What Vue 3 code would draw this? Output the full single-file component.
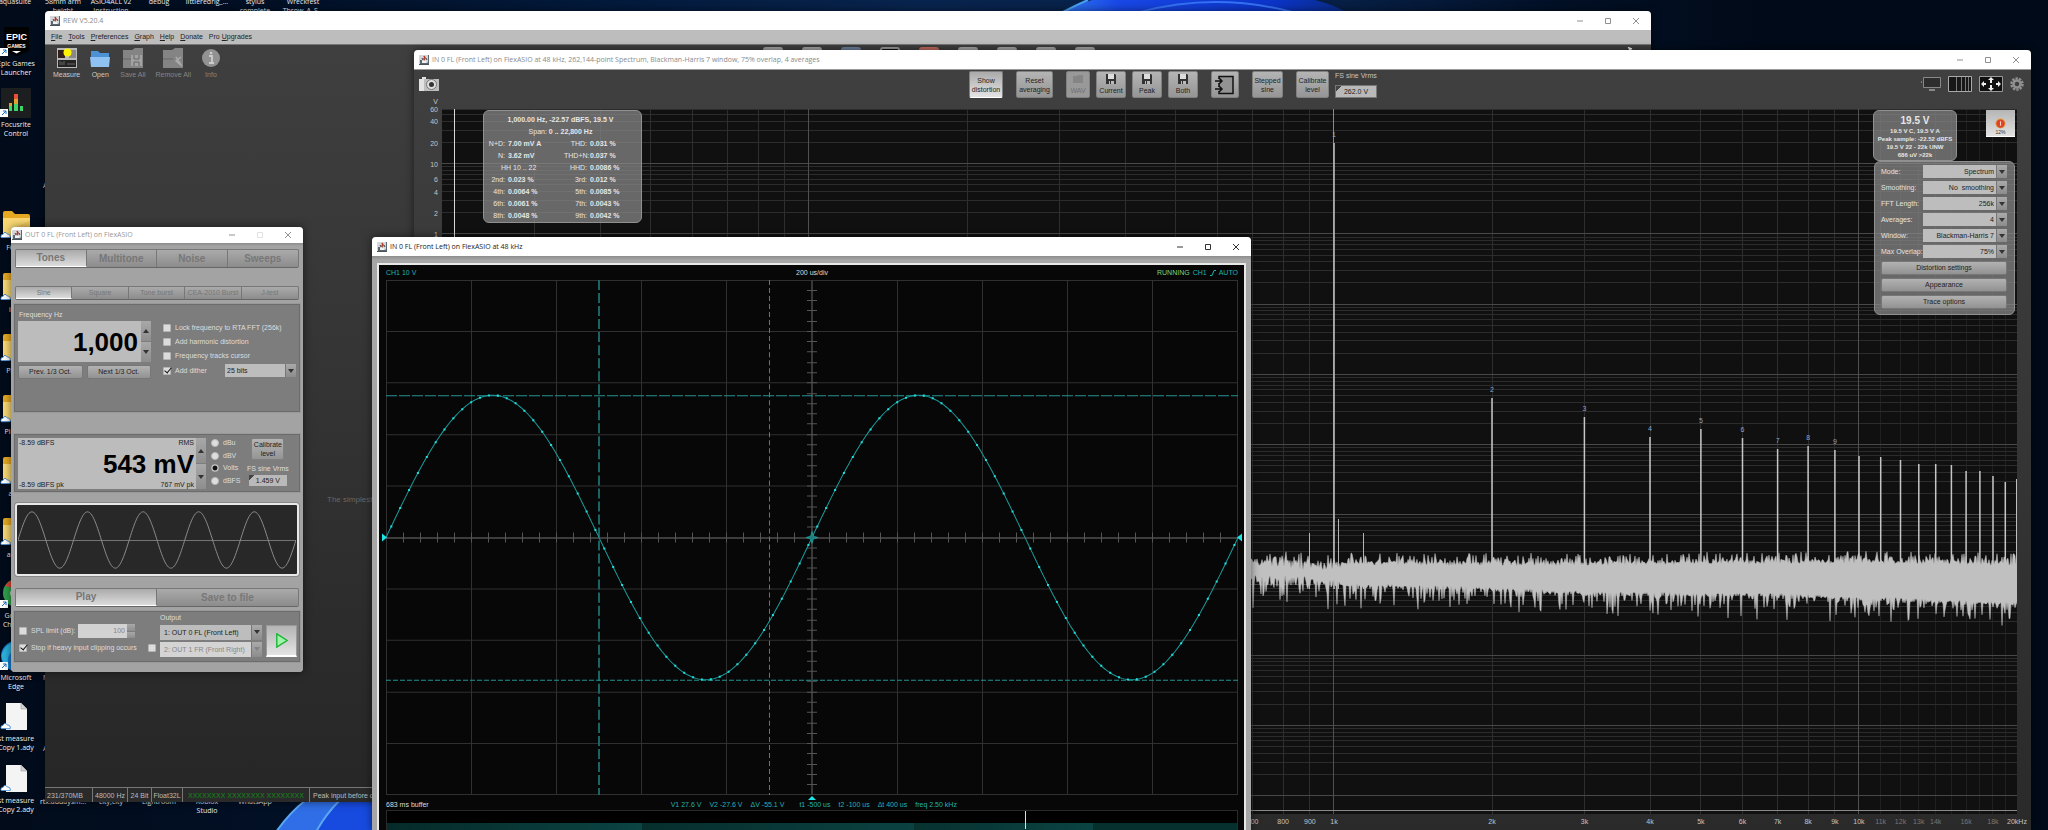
<script setup>
const files = [
  { kind: 'epic', label: ['Epic Games', 'Launcher'] },
  { kind: 'focus', label: ['Focusrite', 'Control'] },
  { kind: 'none', label: [] },
  { kind: 'folder', label: ['FORM'] },
  { kind: 'folder', label: ['iMid'] },
  { kind: 'folder', label: ['Photo'] },
  { kind: 'folder', label: ['Pi Four'] },
  { kind: 'folder', label: ['amir'] },
  { kind: 'folder', label: ['amirs'] },
  { kind: 'chrome', label: ['Google', 'Chrome'] },
  { kind: 'edge', label: ['Microsoft', 'Edge'] },
  { kind: 'file', label: ['st measure', 'Copy 1.ady'] },
  { kind: 'file', label: ['st measure', 'Copy 2.ady'] },
]
const topLabels = [
  ['aquasuite', ''], ['58mm arm', 'height'], ['ASIO4ALL v2', 'Instruction'], ['debug', ''],
  ['littleredrig_...', ''], ['stylus', 'complete'], ['Wreckfest', 'Throw_A_S...'],
]
const bottomLabels = [
  ['rtx.addaysm...', ''], ['city,city', ''], ['Lightroom', ''], ['Roblox', 'Studio'], ['WhatsApp', ''],
]
const menus = [['', 'F', 'ile'], ['', 'T', 'ools'], ['', 'P', 'references'], ['', 'G', 'raph'], ['', 'H', 'elp'], ['', 'D', 'onate'], ['Pro ', 'U', 'pgrades']]

/* Spectrum plot: 20 Hz to 20 kHz across, 60 V downwards on a log scale */
const PW = 1575, PH = 705
const fx = f => 525 * Math.log10(f / 20)
const vy = v => 54.7 - 70.2 * Math.log10(v / 10)
const vMajor = [], vMinor = [], vFaint = []
for (let d = 10; d <= 10000; d *= 10)
  for (let m = 1; m < 10; m++) {
    const f = d * m
    if (f <= 20 || f > 20000) continue
    ;(m === 1 ? vMajor : vMinor).push(fx(f))
  }
for (let f = 11000; f < 20000; f += 1000) vFaint.push(fx(f))
const hMajor = [], hMinor = []
for (let e = -8; e <= 1; e++)
  for (let m = 1; m < 10; m++) {
    const y = vy(m * Math.pow(10, e))
    if (y < 0 || y > 701) continue
    ;(m === 1 ? hMajor : hMinor).push(y)
  }
const snap = n => Math.floor(n) + 0.5
const vPath = xs => xs.map(x => `M${snap(x)} 0V${PH}`).join('')
const hPath = ys => ys.map(y => `M0 ${snap(y)}H${PW}`).join('')

const harmonics = [[1, 34], [2, 289], [3, 308], [4, 328], [5, 320], [6, 329], [7, 340], [8, 337], [9, 341], [10, 347], [11, 348], [12, 351], [13, 355], [14, 355], [15, 356], [16, 362], [17, 362], [18, 367], [19, 373], [19.98, 370]]
const peakPath = harmonics.map(([n, y]) => `M${fx(n * 1000).toFixed(1)} ${y}V480`).join('')
const spurPath = 'M867.500 424V480M896.500 410V480M921.500 424V480'
const peakTags = harmonics.slice(0, 9).map(([n, y]) => ({ n, left: fx(n * 1000) / PW * 100 + '%', top: (y - 8) / PH * 100 + '%' }))

let seed = 7
const rnd = () => (seed = (seed * 16807) % 2147483647) / 2147483647
const env = [[750, 448, 476], [880, 452, 477], [1000, 453, 480], [1150, 453, 486], [1350, 451, 488], [1450, 451, 492], [1576, 453, 497]]
function noise() {
  const top = [], bottom = []
  for (let x = 750; x <= PW; x++) {
    let i = 0
    while (i < env.length - 2 && x > env[i + 1][0]) i++
    const t = (x - env[i][0]) / (env[i + 1][0] - env[i][0])
    const up = env[i][1] + t * (env[i + 1][1] - env[i][1])
    const lo = env[i][2] + t * (env[i + 1][2] - env[i][2])
    const loose = x < 900 ? 8 : 1
    top.push(`${x} ${(up - Math.pow(rnd(), 3) * 10 + rnd() * (3 + loose)).toFixed(1)}`)
    bottom.push(`${x} ${(lo + Math.pow(rnd(), 5) * 24 - rnd() * (3 + loose)).toFixed(1)}`)
  }
  return 'M' + top.concat(bottom.reverse()).join('L') + 'Z'
}
const noisePath = noise()
const axisF = [[700, '700'], [800, '800'], [900, '900'], [1000, '1k'], [2000, '2k'], [3000, '3k'], [4000, '4k'], [5000, '5k'], [6000, '6k'], [7000, '7k'], [8000, '8k'], [9000, '9k'], [10000, '10k'], [11000, '11k', 1], [12000, '12k', 1], [13000, '13k', 1], [14000, '14k', 1], [16000, '16k', 1], [18000, '18k', 1], [20000, '20kHz']]
  .map(([f, t, dim]) => ({ t, dim, left: fx(f) / PW * 100 + '%' }))
const axisV = [60, 40, 20, 10, 6, 4, 2, 1].map(v => ({ v, top: vy(v) / PH * 100 + '%' }))

const stats = [
  ['N+D:', '7.00 mV A', 'THD:', '0.031 %'],
  ['N:', '3.62 mV', 'THD+N:', '0.037 %'],
  ['HH 10 .. 22', '', 'HHD:', '0.0086 %'],
  ['2nd:', '0.023 %', '3rd:', '0.012 %'],
  ['4th:', '0.0064 %', '5th:', '0.0085 %'],
  ['6th:', '0.0061 %', '7th:', '0.0043 %'],
  ['8th:', '0.0048 %', '9th:', '0.0042 %'],
]
const settings = [['Mode:', 'Spectrum'], ['Smoothing:', 'No\u00a0\u00a0smoothing'], ['FFT Length:', '256k'], ['Averages:', '4'], ['Window:', 'Blackman-Harris 7'], ['Max Overlap:', '75%']]

/* Scope: 10 x 10 divisions, two periods */
const SW = 852, SH = 514, MID = 257, AMP = 142
const wave = x => MID - AMP * Math.sin(x * Math.PI * 2 / 426)
let sinePath = 'M0 257'
for (let x = 2; x <= SW; x += 2) sinePath += `L${x} ${wave(x).toFixed(1)}`
const dots = []
for (let x = 5.3; x < SW; x += 8.875) dots.push([x, wave(x)])
const dotPath = dots.map(([x, y]) => `M${(x - 1).toFixed(1)} ${y.toFixed(1)}h2`).join('')
let scopeGrid = ''
for (let i = 0; i <= 10; i++) scopeGrid += `M${snap(Math.min(i * 85.2, 851))} 0V${SH}M0 ${snap(Math.min(i * 51.4, 513))}H${SW}`
let ticks = ''
for (let i = 1; i < 50; i++) ticks += `M${snap(i * 17.04)} 252v10M421 ${snap(i * 10.28)}h10`

/* Generator preview: five cycles */
let genPath = 'M0 35'
for (let x = 1; x <= 279; x++) genPath += `L${x} ${(35 - 29 * Math.sin(x / 279 * Math.PI * 10)).toFixed(1)}`
</script>

<template>
  <main class="desktop">
    <svg class="defs" aria-hidden="true">
      <symbol id="java" viewBox="0 0 10 10">
        <rect width="10" height="10" fill="#d3d7da" />
        <path d="M1 5h2v3h5l1-1v2H1zM9 0h1v10H9z" fill="#5b656e" /><path d="M0 9h10v1H0z" fill="#4a545c" />
        <path d="M3 6h4v2H3z" fill="#eef2f4" /><path d="M5 1l1 2-1 1 1 1" stroke="#b5382a" stroke-width="1.600" fill="none" />
        <path d="M3 3l1 2M7 3l1 2" stroke="#444" fill="none" />
      </symbol>
      <symbol id="floppy" viewBox="0 0 10 10"><path d="M0 0h9l1 1v9H0z" fill="#333" /><path d="M2 0h6v5H2z" fill="#ddd" /><path d="M3 7h5v3H3z" fill="#bbb" /><path d="M4 7h1v3H4z" fill="#333" /></symbol>
    </svg>
    <svg class="bloom" aria-hidden="true">
      <defs>
        <linearGradient id="b1" x1="0" x2="1"><stop offset="0" stop-color="#2f74f0" /><stop offset=".2" stop-color="#1847e6" /><stop offset=".75" stop-color="#0b34c8" /><stop offset="1" stop-color="#0a2c86" /></linearGradient>
      </defs>
      <path d="M1063 12Q1076 5 1092 0H1315Q1334 5 1346 12z" fill="url(#b1)" />
      <path d="M1140 12Q1215-8 1292 12" fill="none" stroke="#3672f5" stroke-width="2" />
      <path d="M1063 12Q1076 5 1088 0" fill="none" stroke="#4ba2f5" stroke-width="2" />
      <path d="M276 832Q290 812 306 800H380V832z" fill="#174be0" />
      <path d="M276 832Q290 812 306 800h34Q325 815 316 832z" fill="#2f6ee6" />
      <path d="M276 832Q290 812 306 800M316 832Q325 815 340 800" fill="none" stroke="#5aa7f2" stroke-width="2" />
    </svg>

    <div class="strip top"><p v-for="l in topLabels" :key="l[0]">{{ l[0] }}<br>{{ l[1] }}</p></div>
    <div class="strip bottom"><p v-for="l in bottomLabels" :key="l[0]">{{ l[0] }}<br>{{ l[1] }}</p></div>
    <span class="peek p1">A</span><span class="peek p2">M</span><span class="peek p3">A</span>

    <div class="files">
      <div v-for="(f, i) in files" :key="i" class="file">
        <svg v-if="f.kind === 'epic'" viewBox="0 0 30 30"><path d="M3 0h25v24l-12 5-13-5z" fill="#020202" />
          <text x="15.500" y="13" class="epic">EPIC</text><text x="15.500" y="21" class="games">GAMES</text><path d="M11 24h9l-4.500 2.500z" fill="#fff" /></svg>
        <svg v-else-if="f.kind === 'focus'" viewBox="0 0 30 30"><rect width="30" height="30" fill="#1c1e20" /><path d="M8 23V15h3v8zM19 23v-5h3v5zM13 23V14h4v9z" fill="#3ed267" /><path d="M8 18v-3h3v3zM13 16v-6h4v6z" fill="#e0a030" /><path d="M13 11V6h4v5z" fill="#e8503a" /></svg>
        <svg v-else-if="f.kind === 'folder'" viewBox="0 0 30 30"><path d="M2 2q0-2 2-2h7l3 3h13q2 0 2 2v21H2z" fill="#e5a823" /><path d="M2 7h27v19H2z" fill="#f9d873" /><path d="M16 16l13-7v17H8z" fill="#f3c95a" /></svg>
        <svg v-else-if="f.kind === 'chrome'" viewBox="0 0 30 30"><circle cx="16" cy="14" r="14" fill="#2f9e4a" /><path d="M4 7a14 14 0 0 1 25 3H16z" fill="#d94335" /><path d="M29 10a14 14 0 0 1-13 18l6-14z" fill="#f2c230" /><circle cx="16" cy="14" r="6" fill="#3f7de8" stroke="#fff" stroke-width="1.500" /></svg>
        <svg v-else-if="f.kind === 'edge'" viewBox="0 0 30 30"><circle cx="15" cy="15" r="15" fill="#1579c9" /><path d="M1 12Q6 0 18 1q10 2 12 12-8-7-17-3T8 26Q-1 20 1 12z" fill="#2cb0dc" /></svg>
        <svg v-else-if="f.kind === 'file'" viewBox="0 0 30 30"><path d="M5 1h15l6 6v21H5z" fill="#f4f4f4" /><path d="M20 1v6h6" fill="#d2d2d2" stroke="#888" stroke-width=".5" /></svg>
        <svg v-else viewBox="0 0 30 30" />
        <i v-if="['epic', 'focus', 'chrome', 'edge'].includes(f.kind)" class="short"><svg viewBox="0 0 8 8"><path d="M2 6l4-4M3 2h3v3" fill="none" stroke="#1670c8" /></svg></i>
        <i v-else-if="f.kind !== 'none'" class="cloud"><svg viewBox="0 0 9 6"><path d="M1 5.500Q0 3 2.500 2.700 4-.5 6 2.500 9 2.500 8.300 5.500z" fill="#fff" stroke="#2c7fd2" stroke-width=".7" /></svg></i>
        <p><template v-for="t in f.label" :key="t">{{ t }}<br></template></p>
      </div>
    </div>

    <!-- REW main window -->
    <section class="win rew">
      <header class="bar"><svg class="java"><use href="#java" /></svg><h1>REW V5.20.4</h1>
        <span class="ctl"><button aria-label="Minimize"><svg viewBox="0 0 8 8"><path d="M1 4h6" /></svg></button><button aria-label="Maximize"><svg viewBox="0 0 8 8"><path d="M1.500 1.500h5v5h-5z" /></svg></button><button aria-label="Close"><svg viewBox="0 0 8 8"><path d="M1 1l6 6M7 1l-6 6" /></svg></button></span>
      </header>
      <nav class="menu"><a v-for="m in menus" :key="m[1]" href="#">{{ m[0] }}<u>{{ m[1] }}</u>{{ m[2] }}</a></nav>
      <div class="tools">
        <button><svg viewBox="0 0 20 20"><rect width="20" height="20" fill="#b9b9b9" /><path d="M1 2h7v8H1z" fill="#33201a" /><path d="M12 2h7v8h-7z" fill="#888" /><path d="M1 12h18v7H1z" fill="#242424" /><path d="M3 13v4M5 14v3M7 13v4M10 16h8" stroke="#666" /><circle cx="10.500" cy="4.500" r="4" fill="#fff200" /></svg>Measure</button>
        <button><svg viewBox="0 0 20 20"><path d="M1 3h7l2 2h9v6H1z" fill="#4d92d4" /><path d="M0 9h20l-1 10H1z" fill="#8fc1f2" /></svg>Open</button>
        <button disabled><svg viewBox="0 0 20 20"><path d="M0 2h9l3-2h8v20H0z" fill="#848484" /><path d="M8 7h11v11H8z" fill="#a2a2a2" /><path d="M0 11h8M11 7v4h5V7M11 18v-4h5v4" stroke="#666" fill="none" /></svg>Save All</button>
        <button disabled><svg viewBox="0 0 20 20"><path d="M0 2h9l3-2h8v20H0z" fill="#848484" /><path d="M0 11h10" stroke="#666" /><path d="M18 9l-5 4 6 5M13 9l5 8" stroke="#aaa" stroke-width="1.500" fill="none" /></svg>Remove All</button>
        <button disabled><svg viewBox="0 0 20 20"><circle cx="10" cy="10" r="9" fill="#929292" /><path d="M8 8h3v7h2M8 15h5" stroke="#ccc" stroke-width="1.800" fill="none" /><circle cx="10" cy="5" r="1.300" fill="#ccc" /></svg>Info</button>
        <span class="stubs"><i v-for="n in 9" :key="n" :class="'s' + n" /></span>
        <svg class="wrench" viewBox="0 0 8 8"><path d="M2 8l3-5-1-2 3 1" stroke="#eee" stroke-width="1.500" fill="none" /></svg>
      </div>
      <p class="hint">The simplest</p>
      <footer class="status"><span class="mem">231/370MB</span><span class="hz">48000 Hz</span><span class="bit">24 Bit</span><span class="fmt">Float32L</span><span class="io">XXXXXXXX XXXXXXXX XXXXXXXX</span><span class="pk">Peak input before clipping</span></footer>
    </section>

    <!-- RTA window -->
    <section class="win rta">
      <header class="bar"><svg class="java"><use href="#java" /></svg><h1>IN 0 FL (Front Left) on FlexASIO at 48 kHz, 262,144-point Spectrum, Blackman-Harris 7 window, 75% overlap, 4 averages</h1>
        <span class="ctl"><button aria-label="Minimize"><svg viewBox="0 0 8 8"><path d="M1 4h6" /></svg></button><button aria-label="Maximize"><svg viewBox="0 0 8 8"><path d="M1.500 1.500h5v5h-5z" /></svg></button><button aria-label="Close"><svg viewBox="0 0 8 8"><path d="M1 1l6 6M7 1l-6 6" /></svg></button></span>
      </header>
      <div class="rtatools">
        <button class="cam" aria-label="Capture"><svg viewBox="0 0 20 14"><path d="M0 2h3V0h4v2h13v12H0z" fill="#e2e2e2" /><path d="M5 2h15v12H5z" fill="#bdbdbd" /><circle cx="12.500" cy="7.500" r="5" fill="#dedede" stroke="#777" /><circle cx="12.500" cy="7.500" r="2.500" fill="#333" /></svg></button>
        <div class="mid">
          <button class="jb on w34">Show<br>distortion</button>
          <button class="jb w37">Reset<br>averaging</button>
          <div class="saves">
            <button class="jb w24" disabled><svg viewBox="0 0 10 10"><path d="M0 2h4l1-1h5v8H0z" fill="#858585" /></svg>WAV</button>
            <button class="jb w30"><svg viewBox="0 0 10 10"><use href="#floppy" /></svg>Current</button>
            <button class="jb w30"><svg viewBox="0 0 10 10"><use href="#floppy" /></svg>Peak</button>
            <button class="jb w30"><svg viewBox="0 0 10 10"><use href="#floppy" /></svg>Both</button>
          </div>
          <button class="jb w28" aria-label="Input routing"><svg class="route" viewBox="0 0 20 20"><path d="M4 4V1.500h14v17H4V16M4 8v4" fill="#929292" stroke="#111" stroke-width="1.500" /><path d="M0 6h7M4 3l3 3-3 3M0 14h7M4 11l3 3-3 3" fill="none" stroke="#111" stroke-width="1.500" /></svg></button>
          <button class="jb w31">Stepped<br>sine</button>
          <div class="cal"><button class="jb w33">Calibrate<br>level</button><label>FS sine Vrms<input value="262.0 V"></label></div>
        </div>
        <div class="view">
          <button aria-label="Display"><svg width="20" height="16" viewBox="0 0 20 16"><path d="M2.500 1.500h17v10h-17z" fill="#2e2e2e" stroke="#888" /><path d="M8 14h6" stroke="#888" stroke-width="2" /><path d="M0 6h1" stroke="#bbb" /></svg></button>
          <button aria-label="Grid"><svg width="24" height="16" viewBox="0 0 24 16"><path d="M.5.5h23v15H.5z" fill="#171717" stroke="#aaa" /><path d="M8.500 1v14M13.500 1v14M17.500 1v14M20.500 1v14" stroke="#777" /></svg></button>
          <button aria-label="Fit"><svg width="24" height="16" viewBox="0 0 24 16"><path d="M.5.5h23v15H.5z" fill="#101010" stroke="#999" /><path d="M12 1l3 3h-2v3h-2V4H9zM12 15l3-3h-2V9h-2v3H9zM2 8l3-3v2h2v2H5v2zM22 8l-3-3v2h-2v2h2v2z" fill="#eee" /></svg></button>
          <button aria-label="Settings"><svg width="14" height="14" viewBox="0 0 14 14"><circle cx="7" cy="7" r="5.500" fill="none" stroke="#909090" stroke-width="2.500" stroke-dasharray="2.300 1.100" /><circle cx="7" cy="7" r="3.500" fill="none" stroke="#909090" stroke-width="2.500" /></svg></button>
        </div>
      </div>
      <div class="plotrow">
        <div class="vaxis"><span class="unit">V</span><span v-for="a in axisV" :key="a.v" :style="{ top: a.top }">{{ a.v }}</span></div>
        <div class="plot">
          <svg class="fill" viewBox="0 0 1575 705" preserveAspectRatio="none">
            <path :d="vPath(vFaint)" stroke="#202020" /><path :d="hPath(hMinor)" stroke="#2c2c2c" /><path :d="vPath(vMinor)" stroke="#2e2e2e" />
            <path :d="hPath(hMajor)" stroke="#484848" /><path :d="vPath(vMajor)" stroke="#505050" />
            <path d="M0 701.500H1575" stroke="#8a8a8a" /><path d="M12.500 0V701" stroke="#d8d8d8" />
            <path d="M891.500 0V34" stroke="#8a8a8a" />
            <path :d="peakPath" stroke="#c6c6c6" stroke-width="1.500" /><path :d="spurPath" stroke="#b4b4b4" /><path :d="noisePath" fill="#c0c0c0" stroke="#c0c0c0" stroke-width=".5" />
          </svg>
          <span v-for="p in peakTags" :key="p.n" class="tag" :style="{ left: p.left, top: p.top }">{{ p.n }}</span>
          <div class="glass info">
            <p><b>1,000.00 Hz, -22.57 dBFS, 19.5 V</b></p>
            <p>Span: <b>0 .. 22,800 Hz</b></p>
            <table><tbody><tr v-for="s in stats" :key="s[0]">
              <template v-if="s[1]"><th>{{ s[0] }}</th><td>{{ s[1] }}</td></template><td v-else colspan="2" class="span">{{ s[0] }}</td>
              <th>{{ s[2] }}</th><td>{{ s[3] }}</td></tr></tbody></table>
          </div>
          <div class="glass level"><strong>19.5 V</strong><b>19.5 V C, 19.5 V A</b><b>Peak sample: -22.52 dBFS</b><b>19.5 V 22 - 22k UNW</b><b>686 uV &gt;22k</b></div>
          <button class="rec" aria-label="Record"><svg viewBox="0 0 12 12"><circle cx="6" cy="6" r="5.500" fill="#e0a03c" /><circle cx="6" cy="6" r="4.500" fill="#dd4230" /><path d="M6 3.500v5" stroke="#fbd0b8" stroke-width="1.200" /></svg>12%</button>
          <form class="glass set" @submit.prevent>
            <label v-for="s in settings" :key="s[0]"><span>{{ s[0] }}</span><span class="dd"><select><option>{{ s[1] }}</option></select></span></label>
            <button class="flat">Distortion settings</button><button class="flat">Appearance</button><button class="flat">Trace options</button>
          </form>
        </div>
      </div>
      <div class="faxis"><span v-for="a in axisF" :key="a.t" :class="{ dim: a.dim }" :style="{ left: a.left }">{{ a.t }}</span></div>
    </section>

    <!-- Generator window -->
    <section class="win gen">
      <header class="bar"><svg class="java"><use href="#java" /></svg><h1>OUT 0 FL (Front Left) on FlexASIO</h1>
        <span class="ctl"><button aria-label="Minimize"><svg viewBox="0 0 8 8"><path d="M1 4h6" /></svg></button><button aria-label="Maximize" disabled><svg viewBox="0 0 8 8"><path d="M1.500 1.500h5v5h-5z" /></svg></button><button aria-label="Close"><svg viewBox="0 0 8 8"><path d="M1 1l6 6M7 1l-6 6" /></svg></button></span>
      </header>
      <div class="genbody">
        <div class="tabs big"><button class="on">Tones</button><button>Multitone</button><button>Noise</button><button>Sweeps</button></div>
        <div class="tabs small"><button class="on">Sine</button><button>Square</button><button>Tone burst</button><button>CEA-2010 Burst</button><button>J-test</button></div>
        <div class="panel freq">
          <div class="fl">
            <label for="fq">Frequency Hz</label>
            <div class="num"><input id="fq" value="1,000"><span class="spin"><button aria-label="Up" class="up" /><button aria-label="Down" class="dn" /></span></div>
            <div class="pair"><button class="flat">Prev. 1/3 Oct.</button><button class="flat">Next 1/3 Oct.</button></div>
          </div>
          <div class="fr">
            <label><input type="checkbox">Lock frequency to RTA FFT (256k)</label>
            <label><input type="checkbox">Add harmonic distortion</label>
            <label><input type="checkbox">Frequency tracks cursor</label>
            <div class="dither"><label><input type="checkbox" checked>Add dither</label><span class="dd left"><select aria-label="Dither bits"><option>25 bits</option></select></span></div>
          </div>
        </div>
        <div class="panel lvl">
          <div class="num tall"><div class="read"><div><span>-8.59 dBFS</span><span>RMS</span></div><input value="543 mV" aria-label="Level"><div><span>-8.59 dBFS pk</span><span>767 mV pk</span></div></div><span class="spin"><button aria-label="Up" class="up" /><button aria-label="Down" class="dn" /></span></div>
          <div class="units"><label><input type="radio" name="u">dBu</label><label><input type="radio" name="u">dBV</label><label><input type="radio" name="u" checked>Volts</label><label><input type="radio" name="u">dBFS</label></div>
          <div class="calb"><button class="jb">Calibrate<br>level</button><label>FS sine Vrms<input value="1.459 V"></label></div>
        </div>
        <div class="preview"><svg viewBox="0 0 279 69" preserveAspectRatio="none"><path d="M0 35.500H279" stroke="#777" /><path :d="genPath" stroke="#8c8c8c" fill="none" /></svg></div>
        <div class="tabs big play"><button class="on">Play</button><button>Save to file</button></div>
        <div class="panel out">
          <div class="ol">
            <div class="spl"><label><input type="checkbox">SPL limit (dB):</label><span class="num mini"><input value="100" disabled aria-label="SPL limit"><span class="spin"><button aria-label="Up" disabled /><button aria-label="Down" disabled /></span></span></div>
            <label><input type="checkbox" checked>Stop if heavy input clipping occurs</label>
          </div>
          <input type="checkbox" class="ch2" aria-label="Second output">
          <div class="om"><label for="o1">Output</label><span class="dd left"><select id="o1"><option>1: OUT 0 FL (Front Left)</option></select></span><span class="dd left off"><select disabled aria-label="Output 2"><option>2: OUT 1 FR (Front Right)</option></select></span></div>
          <button class="go" aria-label="Play"><svg viewBox="0 0 16 16"><path d="M3 1l11 7-11 7z" fill="#9ff5a8" stroke="#1cb43a" stroke-width="1.500" /></svg></button>
        </div>
      </div>
    </section>

    <!-- Scope window -->
    <section class="win scope">
      <header class="bar"><svg class="java"><use href="#java" /></svg><h1>IN 0 FL (Front Left) on FlexASIO at 48 kHz</h1>
        <span class="ctl"><button aria-label="Minimize"><svg viewBox="0 0 8 8"><path d="M1 4h6" /></svg></button><button aria-label="Maximize"><svg viewBox="0 0 8 8"><path d="M1.500 1.500h5v5h-5z" /></svg></button><button aria-label="Close"><svg viewBox="0 0 8 8"><path d="M1 1l6 6M7 1l-6 6" /></svg></button></span>
      </header>
      <div class="frame"><div class="screen">
        <div class="read3"><span>CH1 10 V</span><span class="wh">200 us/div</span><span class="r"><em>RUNNING</em><span>CH1</span><svg viewBox="0 0 6 6"><path d="M0 5.500h2l2-5h2" fill="none" stroke="#22b2b2" /></svg><span>AUTO</span></span></div>
        <div class="grid">
          <svg viewBox="0 0 852 514" preserveAspectRatio="none">
            <path :d="scopeGrid" stroke="#303030" /><path d="M426 0V514" stroke="#383838" stroke-width="2" /><path d="M0 257.500H852" stroke="#606060" /><path :d="ticks" stroke="#555" />
            <path d="M213 0V514" stroke="#1c6464" stroke-width="2" stroke-dasharray="10 3" /><path d="M383.500 0V514" stroke="#259292" stroke-dasharray="5 3" />
            <path d="M0 115.500H852" stroke="#259292" stroke-dasharray="11 2" /><path d="M0 399.500H852" stroke="#259292" stroke-dasharray="5 2" />
            <path :d="sinePath" stroke="#1b9c9c" fill="none" /><path :d="dotPath" stroke="#22dede" stroke-width="2" />
            <path d="M426 251l1.500 4.500 4.500 1.500-4.500 1.500-1.500 4.500-1.500-4.500-4.500-1.500 4.500-1.500z" fill="#1e8080" stroke="#22b0b0" stroke-width=".5" />
            <path d="M-4 253v8l5-4zM856 253v8l-5-4zM422 519h8l-4-4z" fill="#1ee4e4" />
          </svg>
        </div>
        <div class="read3 low"><span class="wh">683 ms buffer</span><span class="meas"><span>V1 27.6 V</span><span>V2 -27.6 V</span><span>ΔV -55.1 V</span><span class="t">t1 -500 us</span><span>t2 -100 us</span><span>Δt 400 us</span><span>freq 2.50 kHz</span></span></div>
        <div class="buf"><div class="band" /><i /></div>
      </div></div>
    </section>
  </main>
</template>

<style>
body { margin: 0; background: #010b1a; }
</style>
<style scoped>
.desktop { position: relative; min-height: 100vh; overflow: hidden; background: linear-gradient(90deg, #010b1a 0, #020f24 12%, #031a3c 30%, #08244e 45%, #071f45 66%, #021026 76%, #010a18 86%); font: 7px/10px "Liberation Sans", Arial, sans-serif; color: #222; }
* { box-sizing: border-box; }
p, h1 { margin: 0; }
button, input, select { font: inherit; color: inherit; margin: 0; padding: 0; border: 0; border-radius: 0; background: none; min-width: 0; }
button { cursor: pointer; }
svg { display: block; }
.defs { position: absolute; width: 0; height: 0; }
.bloom { position: absolute; width: 100%; height: 100%; }
.strip { position: absolute; display: grid; grid-auto-flow: column; grid-auto-columns: 48px; font: 7px/9px "Open Sans", sans-serif; color: #e8ecf0; text-align: center; white-space: nowrap; }
.strip.top { left: -9px; top: -3px; }
.strip.bottom { left: 39px; top: 797px; }
.peek { position: absolute; left: 43px; font: 7px/10px "Open Sans", sans-serif; color: #dde; }
.p1 { top: 181px; } .p2 { top: 673px; } .p3 { top: 744px; }
.files { position: absolute; left: -9px; top: 27px; width: 50px; height: 798px; display: grid; grid-auto-rows: 1fr; }
.file { position: relative; display: flex; flex-direction: column; align-items: center; font: 7px/9px "Open Sans", sans-serif; color: #eef1f5; text-align: center; white-space: nowrap; text-shadow: 0 1px 1px #000; }
.file > svg { width: 30px; height: 30px; flex: none; margin-bottom: 2px; }
.epic { font: bold 9px "Liberation Sans", sans-serif; fill: #fff; text-anchor: middle; }
.games { font: bold 5px "Liberation Sans", sans-serif; fill: #fff; text-anchor: middle; }
.short { position: absolute; left: 9px; top: 21px; width: 8px; height: 8px; background: #fff; }
.cloud { position: absolute; left: 9px; top: 20px; width: 11px; }

.win { position: absolute; display: flex; flex-direction: column; border-radius: 4px 4px 0 0; overflow: hidden; box-shadow: 0 0 8px #0008; }
.bar { flex: none; display: flex; align-items: center; height: 19px; padding: 0 1px 0 5px; gap: 3px; background: #fff; color: #8a8a8a; }
.bar h1 { flex: 1; font: 7px/10px "Open Sans", sans-serif; white-space: nowrap; }
.java { width: 10px; height: 10px; flex: none; }
.ctl { display: flex; }
.ctl button { width: 28px; height: 16px; display: grid; place-items: center; }
.ctl svg { width: 8px; height: 8px; fill: none; stroke: #8f8f8f; }
.ctl button:disabled svg { stroke: #e2e2e2; }

.rew { left: 45px; top: 11px; right: 397px; bottom: 28px; background: linear-gradient(#404040, #262626); color: #ccc; }
.menu { flex: none; display: flex; gap: 6px; height: 15px; align-items: center; padding-left: 6px; background: #bdbdbd; border-bottom: 1px solid #777; }
.menu a { color: #222; text-decoration: none; }
.tools { position: relative; display: flex; gap: 10px; padding: 3px 8px; }
.tools button { display: grid; justify-items: center; gap: 2px; line-height: 9px; color: #c9c9c9; }
.tools button:disabled { color: #858585; }
.tools button svg { width: 20px; height: 20px; }
.stubs { position: absolute; left: 718px; top: 2px; display: flex; gap: 19px; }
.stubs i { width: 20px; height: 12px; background: #a5a5a5; border-radius: 3px; }
.stubs .s3 { border-top: 3px solid #6d7f9c; } .stubs .s4 { border: 2px solid #999; background: #111; } .stubs .s5 { border-top: 3px solid #c0695c; }
.wrench { position: absolute; right: 18px; top: 2px; width: 8px; height: 8px; }
.hint { flex: 1; padding: 413px 0 0 282px; font-size: 8px; color: #666; }
.status { flex: none; display: flex; height: 15px; border-top: 1px solid #777; background: #2a2a2a; line-height: 15px; white-space: nowrap; color: #bbb; text-align: center; }
.status span { border-right: 1px solid #777; overflow: hidden; }
.status .mem { width: 48px; padding-left: 2px; text-align: left; }
.status .hz { width: 35px; } .status .bit { width: 24px; } .status .fmt { width: 31px; }
.status .io { width: 127px; color: #1c6a20; font-size: 7px; font-weight: bold; }
.status .pk { padding-left: 3px; }

.rta { left: 414px; top: 50px; right: 17px; bottom: 0; background: linear-gradient(#404040, #2a2a2a); color: #c4c4c4; }
.rta .bar { border-bottom: 1px solid #999; height: 20px; }
.rtatools { flex: none; display: flex; height: 39px; padding: 1px 7px 0 5px; align-items: flex-start; }
.cam { margin-top: 6px; } .cam svg { width: 20px; height: 14px; }
.mid { display: flex; flex: 1; justify-content: center; gap: 13px; margin-right: 14px; }
.jb { height: 27px; border-radius: 2px; background: linear-gradient(#b4b4b4, #959595); border: 1px solid #808080; color: #222; line-height: 9px; text-align: center; }
.jb.on { background: linear-gradient(#aaa, #e4e4e4); border-bottom-color: #fff; }
.jb svg { width: 10px; height: 10px; margin: 0 auto 2px; }
.jb svg.route { width: 20px; height: 20px; margin: 0 auto; }
.jb:disabled { color: #707070; background: #999; }
.w34 { width: 34px; } .w37 { width: 37px; } .w24 { width: 24px; } .w30 { width: 30px; } .w28 { width: 28px; } .w31 { width: 31px; } .w33 { width: 33px; }
.saves { display: flex; gap: 6px; }
.cal { display: flex; gap: 6px; }
.cal label, .calb label { display: grid; line-height: 9px; white-space: nowrap; }
.cal input, .calb input { background: linear-gradient(135deg, #444 4px, #b9b9b9 4px); color: #222; text-align: center; }
.cal label { align-content: space-between; }
.cal input { width: 42px; height: 13px; border: 1px solid #777; }
.view { display: flex; gap: 7px; align-items: center; margin-top: 5px; }
.plotrow { flex: 1; display: flex; min-height: 0; }
.vaxis { position: relative; width: 28px; flex: none; }
.vaxis span { position: absolute; right: 4px; line-height: 8px; margin-top: -3px; font-size: 7px; }
.vaxis .unit { top: -8px; }
.plot { position: relative; flex: 1; margin-right: 14px; background: #101010; }
.fill { position: absolute; width: 100%; height: 100%; fill: none; }
.tag { position: absolute; width: 8px; margin-left: -4px; margin-top: -5px; text-align: center; font-size: 7px; line-height: 10px; color: #8fa6c4; }
.faxis { position: relative; flex: none; height: 16px; margin: 0 14px 0 28px; font-size: 7px; line-height: 16px; }
.faxis span { position: absolute; width: 30px; margin-left: -15px; text-align: center; }
.faxis .dim { color: #777; }
.glass { position: absolute; background: #8a8a8ab8; border: 1px solid #909090; border-radius: 6px; color: #e6e6e6; }
.info { left: 41px; top: 1px; width: 159px; height: 113px; padding-top: 3px; line-height: 12px; }
.info p { text-align: center; white-space: nowrap; padding-right: 4px; }
.info table { border-collapse: collapse; table-layout: fixed; width: 100%; }
.info tr { height: 12px; }
.info th, .info td { padding: 0; white-space: nowrap; }
.info th { font-weight: normal; text-align: right; padding-right: 3px; }
.info th:first-child { width: 24px; }
.info td { font-weight: bold; width: 56px; }
.info .span { font-weight: normal; padding-left: 17px; width: 80px; }
.info th:nth-child(3) { width: 26px; }
.level { right: 60px; top: 1px; width: 84px; height: 51px; display: flex; flex-direction: column; align-items: center; font-size: 6px; line-height: 8px; padding-top: 4px; white-space: nowrap; }
.level strong { font-size: 10px; line-height: 12px; }
.rec { position: absolute; right: 2px; top: 1px; width: 29px; height: 27px; background: linear-gradient(#b5b5b5, #e2e2e2); border-bottom: 1px solid #fff; font-size: 5px; line-height: 6px; color: #333; }
.rec svg { width: 11px; height: 11px; margin: 6px auto 0; }
.set { right: 2px; top: 52px; width: 141px; padding: 3px 7px 5px 6px; display: grid; gap: 3px; }
.set label { display: grid; grid-template-columns: 1fr 84px; height: 13px; line-height: 13px; white-space: nowrap; }
.dd { position: relative; display: block; height: 13px; background: #bdbdbd; color: #222; }
.dd select { appearance: none; width: 100%; height: 100%; padding: 0 13px 0 2px; text-align-last: right; opacity: 1; }
.dd.left select { text-align-last: left; }
.dd::after { content: ""; position: absolute; right: 0; top: 0; bottom: 0; width: 10px; background: linear-gradient(#aaa, #8c8c8c); border-left: 1px solid #777; pointer-events: none; }
.dd::before { content: ""; position: absolute; z-index: 1; right: 2px; top: 5px; border: 3px solid transparent; border-top: 4px solid #333; border-bottom: 0; pointer-events: none; }
.flat { height: 14px; border: 1px solid #777; border-radius: 2px; background: linear-gradient(#b2b2b2, #929292); color: #222; line-height: 12px; white-space: nowrap; }

.gen { left: 11px; top: 227px; width: 292px; background: #a1a1a1; border-radius: 4px; color: #ddd; }
.gen .bar { height: 16px; padding-left: 1px; color: #999; }
.genbody { display: flex; flex-direction: column; padding: 6px 3px 10px; background: linear-gradient(#8c8c8c, #a3a3a3 3px); }
.tabs { display: grid; grid-auto-flow: column; grid-auto-columns: minmax(0, 1fr); margin: 0 1px; border-radius: 2px; background: linear-gradient(#aaa, #8c8c8c); border: 1px solid #777; border-bottom-color: #666; color: #777; }
.tabs button { border-right: 1px solid #777; }
.tabs button:last-child { border: 0; }
.tabs .on { background: linear-gradient(#aaa, #dcdcdc); border-bottom: 1px solid #fff; }
.big { height: 19px; font: bold 10px/14px "Liberation Sans", sans-serif; }
.small { height: 14px; margin-top: 18px; }
.small button { white-space: nowrap; line-height: 10px; }
.panel { background: #7d7d7d; border: 1px solid #6c6c6c; box-shadow: 0 0 0 1px #999; display: flex; }
.panel label { white-space: nowrap; }
.freq { height: 108px; margin-top: 4px; padding: 5px 3px 0; gap: 12px; }
.fl { width: 133px; display: flex; flex-direction: column; }
.fl > label { padding-left: 1px; }
.num { display: flex; height: 41px; margin-top: 1px; }
.num > input, .read { flex: 1; width: 0; background: #bcbcbc; }
.num > input, .read input { font: bold 26px/34px "Liberation Sans", sans-serif; color: #000; text-align: right; }
.num > input { padding-right: 3px; }
.spin { width: 10px; display: grid; grid-template-rows: 1fr 1fr; gap: 1px; }
.spin button { background: linear-gradient(#a8a8a8, #8e8e8e); display: grid; place-items: center; }
.up::after { content: ""; border: 3px solid transparent; border-bottom: 4px solid #333; border-top: 0; }
.dn::after { content: ""; border: 3px solid transparent; border-top: 4px solid #333; border-bottom: 0; }
.pair { display: grid; grid-template-columns: 1fr 1fr; gap: 4px; margin-top: 3px; }
.fr { flex: 1; display: grid; align-content: start; grid-auto-rows: 14px; padding-top: 11px; }
.fr label, .ol label { display: flex; align-items: center; gap: 4px; }
input[type=checkbox] { appearance: none; width: 8px; height: 8px; background: #dcdcdc; border: 1px solid #b5b5b5; border-radius: 1px; flex: none; position: relative; }
input[type=checkbox]:checked::after { content: ""; position: absolute; left: 2px; top: -2px; width: 3px; height: 6px; border: solid #111; border-width: 0 1px 1px 0; transform: rotate(40deg); }
.dither { display: flex; justify-content: space-between; padding-top: 1px; }
.dither .dd { width: 71px; }
.lvl { height: 58px; margin-top: 22px; padding: 3px 3px 0; gap: 5px; }
.tall { width: 188px; height: 51px; margin: 0; flex: none; }
.read { display: flex; flex-direction: column; justify-content: space-between; color: #222; padding: 0 2px 0 1px; }
.read div { display: flex; justify-content: space-between; line-height: 9px; }
.read input { width: 100%; height: 30px; }
.units { display: flex; flex-direction: column; justify-content: space-between; width: 31px; height: 48px; }
.units label { display: flex; align-items: center; gap: 4px; }
input[type=radio] { appearance: none; width: 8px; height: 8px; border-radius: 50%; background: #dedede; border: 1px solid #bbb; flex: none; }
input[type=radio]:checked { background: radial-gradient(#111 2px, #dedede 3px); }
.calb { display: flex; flex-direction: column; align-items: center; gap: 4px; }
.calb .jb { width: 33px; height: 22px; }
.calb input { width: 38px; height: 11px; margin-top: 2px; justify-self: center; }
.preview { margin: 11px 1px 0; border: 2px solid #e8e8e8; border-radius: 3px; background: #282828; box-shadow: 0 0 0 1px #888; padding: 1px; height: 73px; }
.preview svg { width: 100%; height: 100%; }
.play { margin-top: 12px; }
.out { height: 51px; margin-top: 4px; padding: 1px 2px 3px 4px; }
.ol { width: 129px; display: flex; flex-direction: column; gap: 5px; padding-top: 11px; }
.spl { display: flex; justify-content: space-between; align-items: center; margin-right: 13px; }
.mini { width: 57px; height: 14px; margin: 0; }
.mini > input { font: 7px/14px "Liberation Sans", sans-serif; background: #d2d2d2; color: #888; padding-right: 2px; }
.mini .spin { width: 8px; }
.ch2.ch2 { margin: 31px 4px 0 0; }
.om { display: grid; grid-template-rows: 10px 15px 15px; row-gap: 2px; flex: 1; align-content: start; }
.om .dd { height: 15px; }
.om select { padding-left: 4px; }
.off { background: #d4d4d4; color: #888; } .off::before { opacity: .25; }
.go { width: 31px; height: 32px; margin: 12px 0 0 4px; background: linear-gradient(#b4b4b4, #e4e4e4); border: 1px solid #999; border-bottom: 2px solid #fff; display: grid; place-items: center; }
.go svg { width: 15px; height: 15px; }

.scope { left: 372px; top: 237px; right: 797px; bottom: 0; background: #a6a6a6; }
.scope .bar { color: #222; } .scope .ctl svg { stroke: #333; }
.frame { flex: 1; display: flex; padding: 7px 5px 0; background: linear-gradient(#8c8c8c, #a6a6a6 4px, #a6a6a6); min-height: 0; }
.screen { flex: 1; display: flex; flex-direction: column; border: solid #e8e8e8; border-width: 2px 2px 0; background: #070707; color: #22b2b2; padding: 0 6px 0 7px; min-height: 0; }
.read3 { flex: none; display: grid; grid-template-columns: 1fr auto 1fr; height: 15px; line-height: 16px; white-space: nowrap; }
.wh { color: #ddd; }
.r { display: flex; justify-content: flex-end; gap: 3px; align-items: center; }
.r em { font-style: normal; color: #7ed67e; } .r svg { width: 6px; height: 6px; }
.grid { flex: 1; min-height: 0; }
.grid svg { width: 100%; height: 100%; overflow: visible; }
.low { display: flex; line-height: 19px; }
.meas { display: flex; gap: 8px; flex: 1; padding-left: 242px; } .t { margin-left: 7px; }
.buf { position: relative; flex: none; height: 20px; border: 1px solid #2a2a2a; background: #000; padding-top: 12px; }
.band { height: 8px; background: linear-gradient(90deg, #052a29, #0a4443 30%, #062e2d 30%, #0a4241 62%, #073230 62%, #0a4342 83%, #06302e 83%); }
.buf i { position: absolute; left: 75%; top: 0; bottom: 0; width: 1px; background: #ddd; }
</style>
